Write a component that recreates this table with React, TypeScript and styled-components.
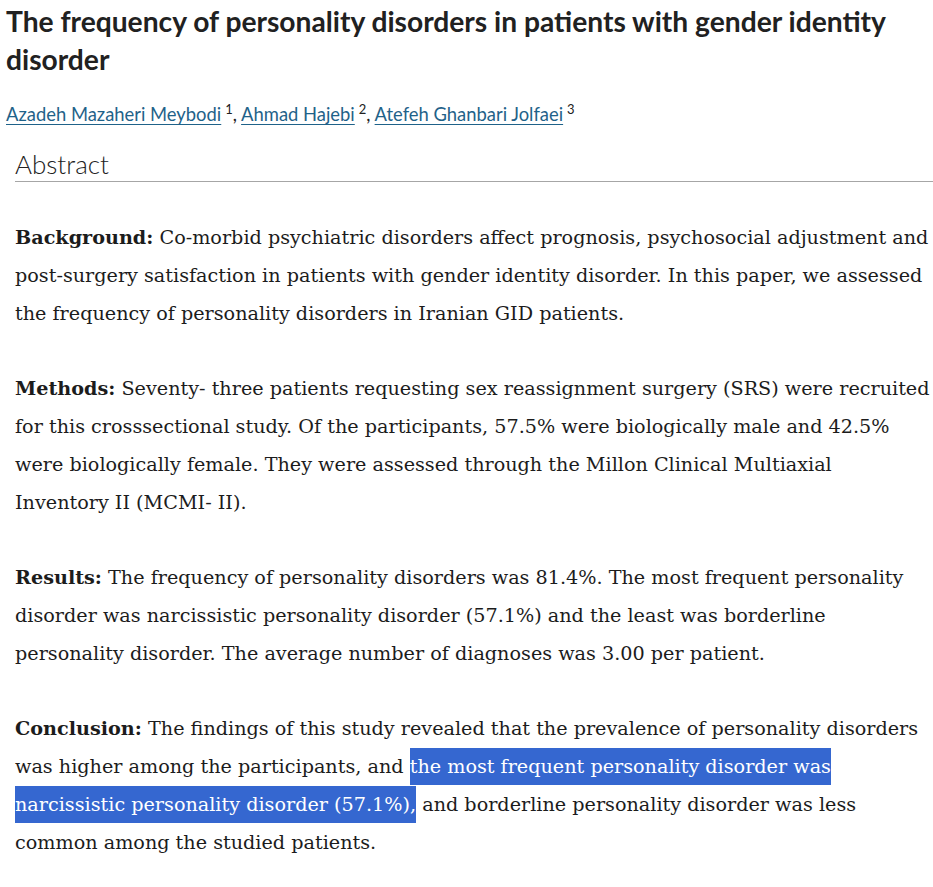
import React from 'react';
import styled, { createGlobalStyle } from 'styled-components';

const Global = createGlobalStyle`
  body {
    margin: 0;
    background: #fff;
    color: #212121;
  }
`;

const Page = styled.main`
  width: 933px;
  padding-top: 2px;
`;

const Title = styled.h1`
  margin: 0;
  padding-left: 6px;
  font-family: Lato, 'Liberation Sans', sans-serif;
  font-weight: 700;
  font-size: 28.2px;
  line-height: 38px;
  color: #212121;
`;

const Authors = styled.div`
  margin-top: 24px;
  padding-left: 6px;
  font-family: Lato, 'Liberation Sans', sans-serif;
  font-size: 18.4px;
  line-height: 24px;
  color: #212121;
`;

const AuthorLink = styled.a`
  color: #1f6289;
  text-decoration: underline;
  text-underline-offset: 3px;
`;

const Sup = styled.sup`
  font-size: 13px;
  line-height: 0;
  margin-left: 4px;
`;

const Abstract = styled.section`
  margin-left: 15px;
`;

const Heading = styled.h2`
  margin: 22px 0 0;
  padding-bottom: 1px;
  border-bottom: 1px solid #a6a6a6;
  font-family: Lato, 'Liberation Sans', sans-serif;
  font-weight: 300;
  font-size: 26px;
  line-height: 32px;
  color: #212121;
`;

const Para = styled.p`
  margin: 37px 0 0;
  font-family: 'DejaVu Serif', serif;
  font-size: 19.2px;
  line-height: 38px;
  color: #1c1c1c;
`;

const Label = styled.b`
  font-weight: 700;
`;

const Selected = styled.span`
  background: #3567d0;
  color: #fff;
  padding: 7px 0;
  box-decoration-break: clone;
  -webkit-box-decoration-break: clone;
`;

const authors = [
  { name: 'Azadeh Mazaheri Meybodi', n: 1 },
  { name: 'Ahmad Hajebi', n: 2 },
  { name: 'Atefeh Ghanbari Jolfaei', n: 3 },
];

export default function App() {
  return (
    <Page>
      <Global />
      <Title>The frequency of personality disorders in patients with gender identity disorder</Title>
      <Authors>
        {authors.map((a, i) => (
          <React.Fragment key={a.name}>
            <AuthorLink href="#">{a.name}</AuthorLink>
            <Sup>{a.n}</Sup>
            {i < authors.length - 1 && ', '}
          </React.Fragment>
        ))}
      </Authors>
      <Abstract>
        <Heading>Abstract</Heading>
        <Para>
          <Label>Background:</Label> Co-morbid psychiatric disorders affect prognosis, psychosocial adjustment and
          post-surgery satisfaction in patients with gender identity disorder. In this paper, we assessed the
          frequency of personality disorders in Iranian GID patients.
        </Para>
        <Para>
          <Label>Methods:</Label> Seventy- three patients requesting sex reassignment surgery (SRS) were recruited for
          this crosssectional study. Of the participants, 57.5% were biologically male and 42.5% were biologically
          female. They were assessed through the Millon Clinical Multiaxial
          <br />
          Inventory II (MCMI- II).
        </Para>
        <Para>
          <Label>Results:</Label> The frequency of personality disorders was 81.4%. The most frequent personality
          disorder was narcissistic personality disorder (57.1%) and the least was borderline personality disorder.
          The average number of diagnoses was 3.00 per patient.
        </Para>
        <Para>
          <Label>Conclusion:</Label> The findings of this study revealed that the prevalence of personality disorders
          was higher among the participants, and{' '}
          <Selected>the most frequent personality disorder was narcissistic personality disorder (57.1%),</Selected>{' '}
          and borderline personality disorder was less common among the studied patients.
        </Para>
      </Abstract>
    </Page>
  );
}
